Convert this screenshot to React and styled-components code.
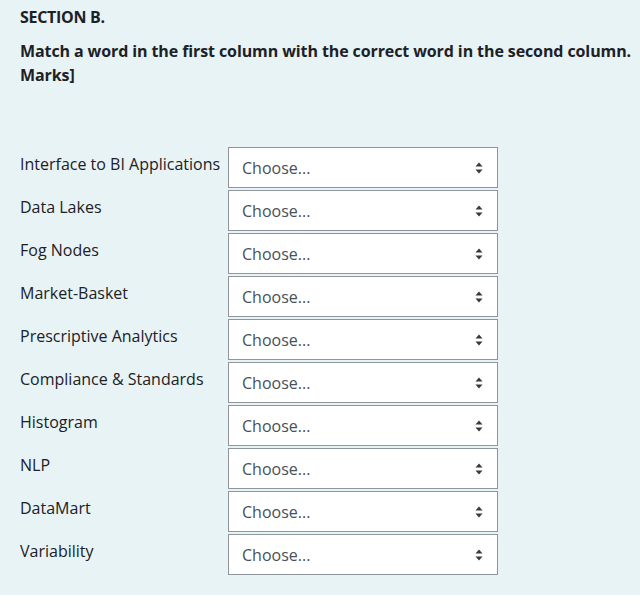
import React from "react";
import styled, { createGlobalStyle } from "styled-components";

const Global = createGlobalStyle`
  html, body { margin: 0; padding: 0; background: #fff; }
  body { font-family: "Open Sans", "Noto Sans", sans-serif; color: #1d2125; }
`;

const Panel = styled.div`
  background: #e7f3f5;
  padding: 5px 0 20px 20px;
  width: 640px;
  box-sizing: border-box;
  overflow: hidden;
`;

const Heading = styled.div`
  font-weight: 700;
  font-size: 16px;
  line-height: 24px;
  letter-spacing: -0.3px;
`;

const Prompt = styled.div`
  font-weight: 700;
  font-size: 16px;
  line-height: 24px;
  margin-top: 10px;
  white-space: nowrap;
  letter-spacing: -0.1px;
`;

const Table = styled.div`
  margin-top: 60px;
  display: grid;
  grid-template-columns: 201px 270px;
  column-gap: 7px;
  row-gap: 2px;
  justify-content: start;
`;

const Label = styled.div`
  font-size: 16px;
  line-height: 24px;
  padding-top: 5px;
  white-space: nowrap;
`;

const Select = styled.div`
  box-sizing: border-box;
  height: 41px;
  border: 1px solid #8f959d;
  background: #fff;
  display: flex;
  align-items: center;
  justify-content: space-between;
  padding: 0 14px 0 13px;
  font-size: 16px;
  color: #495057;
`;

const Arrows = () => (
  <svg width="8" height="12" viewBox="0 0 8 12">
    <path d="M4 0.5 L7.5 4.5 H0.5 Z" fill="#343a40" />
    <path d="M4 11.5 L7.5 7.5 H0.5 Z" fill="#343a40" />
  </svg>
);

const items = [
  "Interface to BI Applications",
  "Data Lakes",
  "Fog Nodes",
  "Market-Basket",
  "Prescriptive Analytics",
  "Compliance & Standards",
  "Histogram",
  "NLP",
  "DataMart",
  "Variability",
];

export default function App() {
  return (
    <>
      <Global />
      <Panel>
        <Heading>SECTION B.</Heading>
        <Prompt>
          Match a word in the first column with the correct word in the second column.
          <br />
          Marks]
        </Prompt>
        <Table>
          {items.map((t) => (
            <React.Fragment key={t}>
              <Label>{t}</Label>
              <Select>
                <span>Choose...</span>
                <Arrows />
              </Select>
            </React.Fragment>
          ))}
        </Table>
      </Panel>
    </>
  );
}
